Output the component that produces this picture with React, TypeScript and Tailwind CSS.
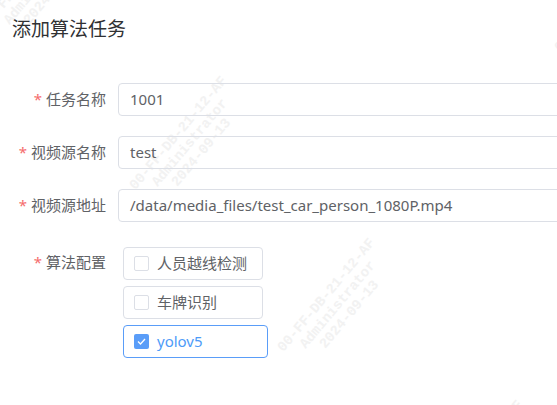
import React from "react";

const marks = [
  { x: 42, y: -19 },
  { x: 190, y: 143 },
  { x: 338, y: 305 },
  { x: 486, y: 467 },
  { x: 615, y: 5 },
];

function Watermark({ x, y }: { x: number; y: number }) {
  return (
    <div
      aria-hidden="true"
      className="absolute -translate-x-1/2 -translate-y-1/2 -rotate-[50deg] flex flex-col items-center font-['Liberation_Mono',monospace] text-[14px] font-bold leading-[15px] text-[#f2f2f2] whitespace-nowrap select-none"
      style={{ left: x, top: y }}
    >
      <span>00-FF-DB-21-12-AF</span>
      <span>Administrator</span>
      <span>2024-09-13</span>
    </div>
  );
}

function Label({ text }: { text: string }) {
  return (
    <div className="w-[106px] shrink-0 text-right text-[15px] text-[#606266]">
      <span className="text-[#f56c6c] mr-[4px]">*</span>
      {text}
    </div>
  );
}

function Field({ label, value }: { label: string; value: string }) {
  return (
    <div className="flex items-center gap-[12px]">
      <Label text={label} />
      <div className="w-[470px] shrink-0 h-[33px] flex items-center px-[11px] border border-[#dcdfe6] rounded-[4px] text-[15px] text-[#606266]">
        {value}
      </div>
    </div>
  );
}

function Check({ text, checked, width }: { text: string; checked?: boolean; width: string }) {
  return (
    <div
      className={
        "h-[33px] flex items-center gap-[8px] pl-[10px] rounded-[4px] border text-[15px] " +
        width +
        (checked ? " border-[#5a9df8] text-[#4d9bf8]" : " border-[#dcdfe6] text-[#606266]")
      }
    >
      {checked ? (
        <span className="w-[15px] h-[15px] rounded-[2px] bg-[#5a9df8] flex items-center justify-center">
          <svg width="9" height="7" viewBox="0 0 9 7" fill="none">
            <path d="M1 3.5 L3.5 6 L8 1" stroke="white" strokeWidth="1.3" />
          </svg>
        </span>
      ) : (
        <span className="w-[15px] h-[15px] rounded-[2px] border border-[#dcdfe6] bg-white" />
      )}
      <span>{text}</span>
    </div>
  );
}

export default function App() {
  return (
    <div className="relative w-full h-[405px] overflow-hidden bg-white font-['Noto_Sans','Noto_Sans_CJK_SC',sans-serif]">
      <div className="absolute inset-0 pointer-events-none">
        {marks.map((m, i) => (
          <Watermark key={i} x={m.x} y={m.y} />
        ))}
      </div>

      <div className="relative flex flex-col">
        <h1 className="pl-[12px] pt-[16px] text-[19px] leading-[26px] text-[#303133]">添加算法任务</h1>

        <div className="mt-[41px] flex flex-col gap-[20px]">
          <Field label="任务名称" value="1001" />
          <Field label="视频源名称" value="test" />
          <Field label="视频源地址" value="/data/media_files/test_car_person_1080P.mp4" />
        </div>

        <div className="mt-[25px] flex items-start gap-[17px]">
          <div className="pt-[4px]">
            <Label text="算法配置" />
          </div>
          <div className="flex flex-col gap-[6px]">
            <Check text="人员越线检测" width="w-[140px]" />
            <Check text="车牌识别" width="w-[140px]" />
            <Check text="yolov5" width="w-[145px]" checked />
          </div>
        </div>
      </div>
    </div>
  );
}
